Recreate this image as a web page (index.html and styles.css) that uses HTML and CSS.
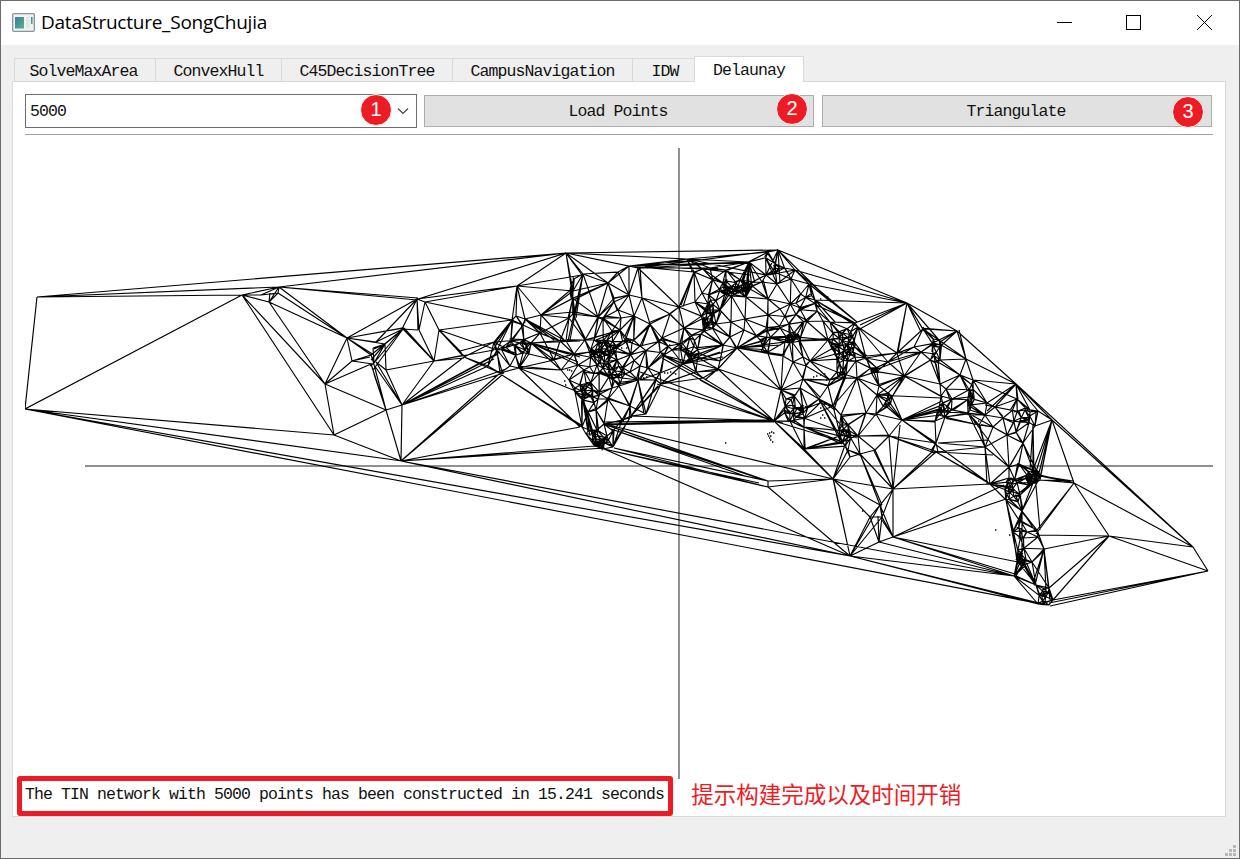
FILE: index.html
```html
<!DOCTYPE html>
<html lang="en">
<head>
<meta charset="utf-8">
<title>DataStructure_SongChujia</title>
<link rel="stylesheet" href="styles.css">
</head>
<body>
<div class="window">
  <header class="titlebar">
    <svg class="app-icon" width="23" height="19" viewBox="0 0 23 19">
      <defs><linearGradient id="g" x1="0" y1="0" x2="1" y2="1"><stop offset="0" stop-color="#3f78b0"/><stop offset="1" stop-color="#55b47c"/></linearGradient></defs>
      <rect x=".7" y=".7" width="21.6" height="17.6" rx="1" fill="#f1f2f3" stroke="#8c9299" stroke-width="1.3"/>
      <rect x="3" y="4" width="9" height="11.5" fill="url(#g)"/>
      <rect x="14" y="4" width="3.6" height="11" fill="#e3e5e6"/>
      <rect x="19" y="4" width="1.6" height="7" fill="url(#g)"/>
    </svg>
    <span class="title">DataStructure_SongChujia</span>
    <svg class="controls" width="157" height="17" viewBox="0 0 157 17" fill="none" stroke="#000">
      <path d="M1 8.5H16M70.5 1.5h14v14h-14z" shape-rendering="crispEdges"/>
      <path d="M141 1L156 16M156 1L141 16"/>
    </svg>
  </header>
  <nav class="tabs">
    <span class="tab t1">SolveMaxArea</span><span class="tab t2">ConvexHull</span><span class="tab t3">C45DecisionTree</span><span class="tab t4">CampusNavigation</span><span class="tab t5">IDW</span><span class="tab active">Delaunay</span>
  </nav>
  <main class="pane">
    <div class="toolbar">
      <div class="combo"><span>5000</span>
        <svg class="chevron" width="12" height="8" viewBox="0 0 12 8"><path d="M1 1.5L6 6.5L11 1.5" fill="none" stroke="#444" stroke-width="1.2"/></svg>
        <b class="badge b1">1</b></div>
      <div class="button">Load Points<b class="badge b2">2</b></div>
      <div class="button">Triangulate<b class="badge b3">3</b></div>
    </div>
    <div class="rule"></div>
    <svg class="chart" width="1188" height="644" viewBox="25 135 1188 644">
      <path class="axis" d="M679 148V779M85 466H1213"/>
      <path class="mesh" id="mesh"/>
      <path class="dots" id="dots"/>
    </svg>
    <div class="status"><span>The TIN network with 5000 points has been constructed in 15.241 seconds</span><span class="note">提示构建完成以及时间开销</span><i class="frame"></i></div>
  </main>
  <svg class="grip" width="11" height="11" viewBox="0 0 11 11" fill="#b8b8b8"><path d="M8 0h3v3h-3zM4 4h3v3h-3zM8 4h3v3h-3zM0 8h3v3h-3zM4 8h3v3h-3zM8 8h3v3h-3z"/></svg>
</div>
<script src="mesh.js"></script>
</body>
</html>
```
FILE: styles.css
```css
* { box-sizing: border-box; }
body { margin: 0; }
.window {
  width: 1240px; height: 859px; position: relative;
  display: flex; flex-direction: column;
  border: 1px solid #6b6b6b; background: #efefef;
  font: 16.5px/20px "Liberation Mono", monospace; letter-spacing: -0.9px; color: #111;
}
.titlebar { height: 44px; background: #fff; display: flex; align-items: center; padding: 0 26px 2px 11px; }
.title { font: 19px/26px "Open Sans", "Noto Sans", sans-serif; letter-spacing: -0.24px; margin-left: 6px; color: #000; }
.controls { margin-left: auto; }
.tabs { height: 36px; display: flex; align-items: flex-end; padding-left: 13px; }
.tab { height: 23px; border: 1px solid #d9d9d9; border-bottom: 0; border-right: 0; padding-top: 3px; text-align: center; white-space: nowrap; }
.t1 { width: 141px; padding-right: 3px; }
.t2 { width: 126px; }
.t3 { width: 171px; }
.t4 { width: 180px; }
.t5 { width: 62px; padding-left: 3px; }
.active { width: 110px; height: 26px; padding-top: 4px; border-right: 1px solid #d9d9d9; background: #fff; margin-bottom: -1px; z-index: 1; }
.pane { width: 1214px; height: 736px; margin-left: 11px; padding: 12px; background: #fff; border: 1px solid #d9d9d9; }
.toolbar { display: flex; align-items: center; height: 34px; }
.combo { position: relative; width: 392px; height: 34px; margin-right: 7px; border: 1px solid #6e6e6e; padding: 7px 4px; }
.chevron { position: absolute; right: 7px; top: 12px; }
.button { position: relative; width: 390px; height: 32px; margin-right: 8px; flex: none; padding: 6px 2px 0 0; border: 1px solid #adadad; background: #e1e1e1; text-align: center; }
.button:last-child { margin-right: 0; }
.badge { position: absolute; width: 32px; height: 32px; border: 1.5px solid #fff; border-radius: 50%; background: #ed1c24; color: #fff; font: 20px/29px "Liberation Sans", sans-serif; letter-spacing: 0; text-align: center; }
.b1 { left: 334px; top: -1px; }
.b2 { left: 351px; top: -3px; }
.b3 { left: 349px; top: 0; }
.rule { height: 1px; margin-top: 6px; background: #a0a0a0; }
.chart { display: block; }
.axis { stroke: #909090; stroke-width: 2; fill: none; shape-rendering: crispEdges; }
.mesh { stroke: #000; stroke-width: 1.15; fill: none; }
.dots { stroke: #000; stroke-width: 1.4; fill: none; }
.status { position: relative; display: flex; align-items: center; height: 32px; white-space: nowrap; }
.note { font: 22.5px/30px "Noto Sans CJK SC", sans-serif; letter-spacing: 0; color: #ed1c24; margin: -4px 0 0 27px; }
.frame { position: absolute; left: -8px; top: -3px; width: 656px; height: 40px; border: 5px solid #ed1c24; border-radius: 3px; }
.grip { position: absolute; right: 3px; bottom: 2px; }
```
FILE: mesh.js
```js
// Vertices of the dense part of the network, triangulated below.
const vertexText = `
517,286 512,320 516,316 525,319 541,315 540,333 523,325 511,344 494,342 497,350 464,357 460,351 510,366 519,368 500,373 531,343 525,350 514,345 529,354 488,366
560,341 566,341 569,318 574,312 583,274 573,291 608,283 603,318 598,317 629,295 642,298 629,266 638,268 618,272 614,302 618,310 620,330 612,331 632,343 640,346 585,340 594,340 574,354 554,360 561,370 569,380 575,392 580,385 584,370 600,394
600,357 607,343 613,348 617,360 623,368 622,378 609,376 603,368 592,353 597,365 578,365 590,385 612,388 619,386 630,372 640,366 648,368 634,316 614,298 621,318
575,388 583,395 593,390 596,410 588,412 604,424 582,427 589,430 586,434 592,440 595,446 602,440 613,431 613,447 603,449 607,436 597,430 598,399 608,399 622,420 631,416 630,406 620,384 638,380 656,380 661,384 660,373 646,414
640,267 687,259 694,272 703,269 710,268 726,270 749,262 768,252 778,250 766,275 795,270 809,284 815,300 796,303 791,279 777,284 768,299 751,287 746,297 728,294 726,281 742,280 733,290 762,282 702,293 695,302 679,307 670,314
650,324 662,338 664,355 672,350 680,348 683,364 695,357 690,337 701,334 684,328 707,326 716,324 712,314 708,304 720,310 723,345 737,348 718,369 703,378 696,372 720,361 730,337 744,330 745,319 731,322 768,315 761,341 780,309 780,328 767,330 785,342 793,338 800,341 789,335 806,320 783,356 793,362 803,357 806,366 810,361 828,340 823,321 803,379 781,390 774,421 786,399 800,388 819,399 833,406 828,386 804,408 820,403 790,421 804,427 804,449 843,442
858,327 855,323 830,322 842,334 843,345 850,350 855,357 848,349 835,349 838,358 843,371 844,378 857,378 830,380 837,372 841,415 842,425 858,436 851,435 848,450 850,457 875,450 860,454 866,358 856,361 872,371 888,362 897,353 866,413 879,386 877,395 886,401 887,407 892,397 876,414 902,420 889,436 904,376
907,303 923,329 957,331 966,359 939,340 940,360 933,343 921,352 914,347 940,384 941,396 942,410 939,415 948,412 952,399 946,389 960,375 973,380 972,398 970,410 968,413 985,415 987,403 993,427 985,447 979,425 935,421 936,443 938,452 932,452 945,417 1017,399 1016,384 1052,420 1038,411 1030,412 1035,426 1025,410 1028,420 1016,432 1003,418 995,407 1007,435 1023,443 1009,467 1019,464 1033,470 1036,477 1040,480 1028,485 1009,478 1006,486 1006,500 1020,495 1018,502 1022,511 990,484
893,489 880,505 870,517 882,517 879,542 893,537
1013,532 1018,562 1022,565 1032,562 1014,576 1027,532 1037,530 1038,537 1044,549 1036,585 1049,588 1053,600 1049,605 1038,604 1045,602`;

// Long edges: each line starts with the hub, followed by its neighbours.
const fanText = `
37,297 25,409 566,253 242,295 279,287
25,409 242,295 334,435 402,461 850,556 1047,605
566,253 279,287 418,299 517,286 583,274 608,283 629,266 778,250 573,291 575,312 687,259 638,268 582,275
279,287 418,298 417,300 261,295 269,302 278,293 347,338
242,295 279,287 261,295 269,302 325,384 334,435
278,293 269,302 261,295 347,338
269,302 347,338 325,384 279,287 270,293
417,299 347,338 425,302 419,330 402,329 418,330 376,342 517,286
425,302 419,330 439,330 517,286 512,320
403,329 418,330 434,361 385,344 376,342 371,355 373,370
347,338 325,384 352,361 371,355 374,355 385,344 404,328 376,342 402,328
325,384 352,361 371,364 386,410 334,435
352,361 371,355 373,364 370,357
334,435 386,410 401,461
386,410 402,405 401,461 371,364 373,370 374,374 372,357
402,405 401,461 386,370 376,362 374,365 434,361 498,354 500,352 494,359 506,369 504,373 464,357 488,366
374,363 385,344 403,328 373,348 371,355 370,366
385,344 386,370 374,349 373,348 371,360
386,370 376,362 434,361
434,361 404,328 419,330 439,330 464,355 494,350 464,358
439,330 512,320 464,357 460,351 497,350
401,461 500,373 502,375 580,427 605,448 595,446 850,556 1014,576
517,286 541,315 573,291 512,320 516,316 525,319 582,275
541,315 540,333 565,341 573,312 573,291
525,319 560,341 566,341 554,340
512,320 494,342 497,350 491,353 511,344
494,342 460,351 464,357 497,350 502,372
531,343 580,341 580,357 578,362 578,365 568,354 554,360 561,370 574,354 566,340
519,368 580,427 561,370 554,360 578,392 532,343
502,375 582,427 581,425
583,274 575,312 576,318 570,340 568,341 608,283 598,317
608,283 598,317 614,302 617,310 606,284 629,266
629,266 687,259 687,261 726,270 749,262 694,272 608,283
638,268 687,259 749,262 778,250 679,307 718,268
687,259 768,252 749,262 766,275
620,330 598,317 585,340 590,339 596,340 603,318 606,341
703,269 749,262 751,275 733,290
749,262 748,290 746,297 755,283 728,270 762,282
694,272 683,307 681,305 695,302
778,250 907,303 831,302 795,270 766,275 768,252 780,283
795,270 907,303 857,322 768,275 777,284
809,284 907,303 857,322 831,302
815,300 907,303 858,327 855,323 835,322
907,303 860,325 858,330 855,323 897,353 898,352 923,329 924,331 957,331 921,332 939,340
957,331 1016,384 923,329 966,359 940,342
966,359 1016,384 923,329 960,375
858,327 897,353 888,362 866,358
973,380 1016,384 1017,399
1016,384 1193,547 1052,420 1018,399 987,411
1052,420 1193,547 1074,483 1036,472 1033,470 1040,478 1038,477
1040,480 1074,483 1074,481 1052,420
1035,475 1074,483 1073,481 1040,530
1074,483 1193,547 1109,536 1037,530 1036,534 1040,475
1109,536 1038,535 1044,549 1049,588 1053,600 1208,571 1193,547
1208,571 1193,547 1049,603 1053,600 1050,606
850,556 1014,576 1038,604 1047,605 879,542 881,541 870,517 880,505 882,517 833,479 834,482
879,542 1014,576 893,537 882,517 878,516
893,537 1018,562 1014,576 1015,574 893,489 1004,485 1006,499 880,505 882,520
893,489 990,484 936,452 932,452 900,425 889,436 875,450 874,451 880,505 833,479
833,479 880,505 893,489 870,517 848,450 850,457 845,445 774,421 804,449
860,454 893,489 880,505 882,505
774,421 700,380 662,358 657,384 640,372 703,378 718,369 804,449 843,442 790,421 781,390 783,423
737,348 781,390 785,355 783,356 718,369 781,345
718,369 781,390 774,421
662,355 703,378 718,369 683,364
683,364 737,348 723,345 720,352 723,357 695,357
737,348 785,342 783,356 768,330 767,340
604,424 774,421 833,479 768,481 620,421
631,416 774,421 646,414
604,422 774,422 774,420
611,429 768,481 764,480 745,476 613,432
606,425 768,481 774,421
614,448 768,487 768,481
604,449 850,556 768,487 759,483
582,395 595,446 597,446 588,430
768,481 768,487 833,479
768,487 833,479 850,556
804,449 843,442 804,447 850,440 843,443
804,427 843,442 842,444
819,399 843,442 840,440 845,430 835,410
902,420 942,401 942,405 942,408 941,411 935,421 940,415 936,443 990,484
889,436 936,443 932,452 938,452
936,452 985,447 990,484 988,482 993,455
938,443 987,440 985,447
985,447 1009,467 987,484
990,484 1006,500 1009,467 1006,486
968,413 985,447 1009,467 993,427 942,412
1033,425 1033,470 1034,474 1030,470
877,395 941,398 904,376
888,362 914,347 921,352
872,371 904,376 923,352
640,380 648,368 660,373
631,416 656,380 661,384 660,373 658,386
582,395 582,427 588,432 590,436
1006,500 1018,562 1013,532 1014,533 1017,558 1020,560
1022,511 1013,532 1022,565 1037,530 1036,532
1044,549 1049,588 1050,600 1034,580 1046,590 1032,562 1035,585
1018,562 1014,576 1036,585`;

const read = text => text.trim().split(/\s+/).map(p => p.split(',').map(Number));
const vertices = [];
const taken = new Set();
const add = (x, y) => {
  const key = x.toFixed(1) + ',' + y.toFixed(1);
  if (!taken.has(key)) { taken.add(key); vertices.push([x, y]); }
};
read(vertexText).forEach(([x, y]) => add(x, y));

let state = 41;
const random = () => (state = (state * 16807) % 2147483647) / 2147483647;

// Survey hot spots: centre x, centre y, spread x, spread y, count.
[[606,349,12,9,34],[598,353,10,6,14],[602,362,14,18,22],[742,286,11,7,32],[731,291,9,5,16],[770,270,18,14,10],[793,338,8,6,32],[843,344,12,20,42],
 [708,318,8,17,34],[690,348,11,14,22],[1033,477,8,8,44],[1023,562,6,4,20],[1044,596,5,9,16],[598,438,11,9,24],
 [842,376,5,4,10],[873,370,5,4,12],[936,352,8,14,14],[844,434,7,14,20],[971,396,4,12,12],[1012,488,8,12,18],
 [514,345,14,12,14],[795,408,14,14,22],[617,373,9,7,14],[589,392,12,12,18],[1020,540,6,22,10],[1022,415,12,10,10],
 [716,290,14,12,10],[800,310,20,18,14],[574,300,5,30,6],[630,350,12,14,8],[885,400,8,10,8],[945,408,7,8,8],[768,335,15,18,8],[654,345,16,10,6]
].forEach(([cx, cy, rx, ry, n]) => {
  for (let i = 0; i < n; i++) {
    const a = random() * Math.PI * 2, r = Math.sqrt(random());
    add(cx + rx * r * Math.cos(a), cy + ry * r * Math.sin(a));
  }
});

// Bowyer-Watson triangulation.
function triangulate(points) {
  const pts = points.concat([[-9000, -9000], [9000, -9000], [600, 12000]]);
  const n = points.length;
  const make = (a, b, c) => {
    const [ax, ay] = pts[a], [bx, by] = pts[b], [cx, cy] = pts[c];
    const d = 2 * (ax * (by - cy) + bx * (cy - ay) + cx * (ay - by));
    if (Math.abs(d) < 1e-9) return { v: [a, b, c], x: 0, y: 0, r: Infinity };
    const a2 = ax * ax + ay * ay, b2 = bx * bx + by * by, c2 = cx * cx + cy * cy;
    const x = (a2 * (by - cy) + b2 * (cy - ay) + c2 * (ay - by)) / d;
    const y = (a2 * (cx - bx) + b2 * (ax - cx) + c2 * (bx - ax)) / d;
    return { v: [a, b, c], x, y, r: (ax - x) ** 2 + (ay - y) ** 2 };
  };
  let tris = [make(n, n + 1, n + 2)];
  for (let i = 0; i < n; i++) {
    const [x, y] = pts[i], edges = new Map(), keep = [];
    for (const t of tris) {
      if ((x - t.x) ** 2 + (y - t.y) ** 2 < t.r) {
        const [a, b, c] = t.v;
        for (const [p, q] of [[a, b], [b, c], [c, a]]) {
          const key = Math.min(p, q) + '_' + Math.max(p, q);
          if (edges.has(key)) edges.set(key, null); else edges.set(key, [p, q]);
        }
      } else keep.push(t);
    }
    for (const e of edges.values()) if (e) keep.push(make(e[0], e[1], i));
    tris = keep;
  }
  return tris.map(t => t.v).filter(v => v.every(k => k < n));
}

const seen = new Set();
let path = '';
for (const [a, b, c] of triangulate(vertices)) {
  for (const [p, q] of [[a, b], [b, c], [c, a]]) {
    const key = Math.min(p, q) + '_' + Math.max(p, q);
    if (seen.has(key)) continue;
    seen.add(key);
    const [x1, y1] = vertices[p], [x2, y2] = vertices[q];
    if (Math.hypot(x1 - x2, y1 - y2) < 43) {
      path += `M${x1} ${y1}L${x2} ${y2}`;
      if (random() < 0.3) path += `M${x1} ${y1}L${x2 + random() * 4 - 2} ${y2 + random() * 4 - 2}`;
    }
  }
}
for (const line of fanText.trim().split('\n')) {
  const [hub, ...ends] = read(line);
  for (const end of ends) path += `M${hub}L${end}`;
}
document.getElementById('mesh').setAttribute('d', path);

// Points outside the drawn triangles.
const dots = read('725,443 767,434 769,433 768,436 769,438 770,440 771,432 773,433 770,436 772,442 995,530 1009,535 862,511 661,366 664,373 667,373 670,372 673,373 675,374 640,379 643,378 646,377 813,377 816,376 820,375 824,374 826,380 820,408 822,415 824,418 820,418 827,297 820,299 567,370 569,370 571,371 617,347 621,348 626,348 565,385 564,381 978,421 974,422');
document.getElementById('dots').setAttribute('d', dots.map(([x, y]) => `M${x} ${y}h1.4`).join(''));
```
